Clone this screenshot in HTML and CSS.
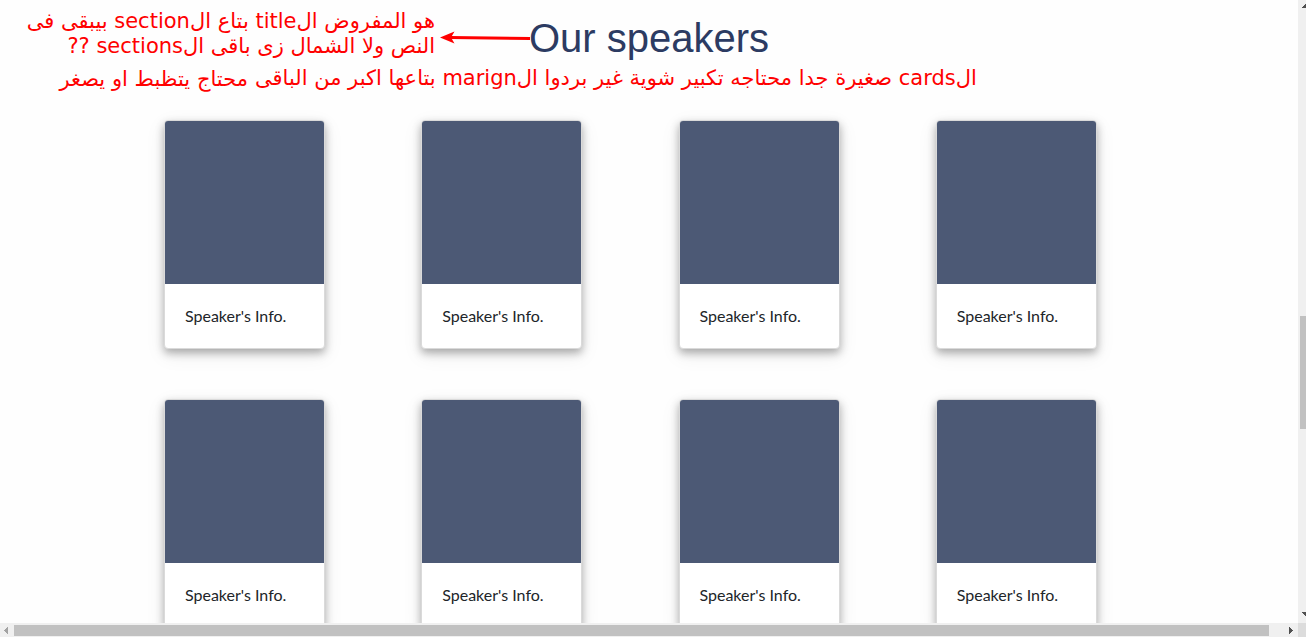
FILE: index.html
```html
<!DOCTYPE html>
<html lang="en">
<head>
<meta charset="utf-8">
<title>Our speakers</title>
<link rel="stylesheet" href="styles.css">
</head>
<body>
<main class="viewport">
  <header class="heading">
    <h1 class="title">Our speakers</h1>
    <p class="note note-title" dir="rtl" lang="ar">هو المفروض الtitle بتاع الsection بيبقى فى<br>النص ولا الشمال زى باقى الsections ??</p>
    <p class="note note-cards" dir="rtl" lang="ar">الcards صغيرة جدا محتاجه تكبير شوية غير بردوا الmarign بتاعها اكبر من الباقى</p>
    <p class="note note-margin" dir="rtl" lang="ar">محتاج يتظبط او يصغر</p>
    <svg class="arrow" width="92" height="14" viewBox="0 0 92 14" aria-hidden="true">
      <path d="M10 7.5L90 8.5" stroke="#f00" stroke-width="3" fill="none"/>
      <path d="M0 7.5L14.5 1.5L11 7.5L14.5 13.5Z" fill="#f00"/>
    </svg>
  </header>
  <section class="speakers">
    <article class="card"><div class="photo"></div><p class="info">Speaker's Info.</p></article>
    <article class="card"><div class="photo"></div><p class="info">Speaker's Info.</p></article>
    <article class="card"><div class="photo"></div><p class="info">Speaker's Info.</p></article>
    <article class="card"><div class="photo"></div><p class="info">Speaker's Info.</p></article>
    <article class="card"><div class="photo"></div><p class="info">Speaker's Info.</p></article>
    <article class="card"><div class="photo"></div><p class="info">Speaker's Info.</p></article>
    <article class="card"><div class="photo"></div><p class="info">Speaker's Info.</p></article>
    <article class="card"><div class="photo"></div><p class="info">Speaker's Info.</p></article>
  </section>
</main>
<div class="bar-y" aria-hidden="true">
  <svg class="cap" width="8" height="14" viewBox="0 0 8 14"><path d="M4 8V7h1V6h1V5h1V4h1v4z" fill="#505050"/></svg>
  <div class="track-y"><div class="thumb-y"></div></div>
  <svg class="cap" width="8" height="14" viewBox="0 0 8 14"><path d="M4 3v1h1v1h1v1h1v1h1V3z" fill="#505050"/></svg>
</div>
<div class="bar-x" aria-hidden="true">
  <svg class="cap" width="14" height="14" viewBox="0 0 14 14"><path d="M8 4v7H7v-1H6V9H5V8H4V7h1V6h1V5h1V4z" fill="#a3a3a3"/></svg>
  <div class="track-x"><div class="thumb-x"></div></div>
  <svg class="cap" width="14" height="14" viewBox="0 0 14 14"><path d="M5 4v7h1v-1h1V9h1V8h1V7H8V6H7V5H6V4z" fill="#505050"/></svg>
</div>
<div class="corner"></div>
</body>
</html>
```

FILE: styles.css
```css
* {
  box-sizing: border-box;
}

body {
  margin: 0;
  height: 100vh;
  display: grid;
  grid-template-columns: minmax(0, 1fr) 8px;
  grid-template-rows: minmax(0, 1fr) 14px;
  overflow: hidden;
  background: #fefefe;
  font-family: "Liberation Sans", Arial, sans-serif;
}

.viewport {
  overflow: hidden;
}

.heading {
  position: relative;
  padding: 14px 0 58px;
}

.title {
  margin: 0;
  font-size: 40px;
  font-weight: 400;
  line-height: 48px;
  text-align: center;
  color: #2c3b62;
}

.note {
  position: absolute;
  margin: 0;
  font-family: "DejaVu Sans", sans-serif;
  font-size: 21px;
  line-height: 25px;
  white-space: nowrap;
  color: #f00;
}

.note-title {
  top: 9px;
  right: calc(50% + 214px);
}

.note-cards {
  top: 66px;
  left: calc(50% - 394px);
}

.note-margin {
  top: 67px;
  right: calc(50% + 401px);
}

.arrow {
  position: absolute;
  top: 30px;
  left: calc(50% - 209px);
}

.speakers {
  display: grid;
  grid-template-columns: repeat(4, minmax(0, 1fr));
  row-gap: 50px;
  padding: 0 105px 50px 164px;
}

.card {
  width: 161px;
  border: 1px solid #dadada;
  border-radius: 4px;
  background: #fff;
  box-shadow: 0 4px 8px rgba(0, 0, 0, 0.3), 0 6px 20px rgba(0, 0, 0, 0.08);
}

.photo {
  height: 163px;
  border-radius: 3px 3px 0 0;
  background: #4c5975;
}

.info {
  margin: 0;
  padding: 20px;
  font-family: Lato, "Open Sans", sans-serif;
  font-size: 16px;
  line-height: 24px;
  white-space: nowrap;
  color: #212529;
}

.bar-y {
  display: flex;
  flex-direction: column;
  background: #f0f0f0;
}

.bar-x {
  display: flex;
  background: #f0f0f0;
}

.cap {
  flex: none;
}

.track-y {
  flex: 1;
  display: grid;
  grid-template-rows: 302fr 113fr 180fr;
  padding-left: 2px;
}

.thumb-y {
  grid-row: 2;
  background: #c1c1c1;
}

.track-x {
  flex: 1;
  display: grid;
  grid-template-columns: 1255fr 15fr;
  padding: 2px 0 1px;
}

.thumb-x {
  background: #c1c1c1;
}

.corner {
  background: #dcdcdc;
}
```
